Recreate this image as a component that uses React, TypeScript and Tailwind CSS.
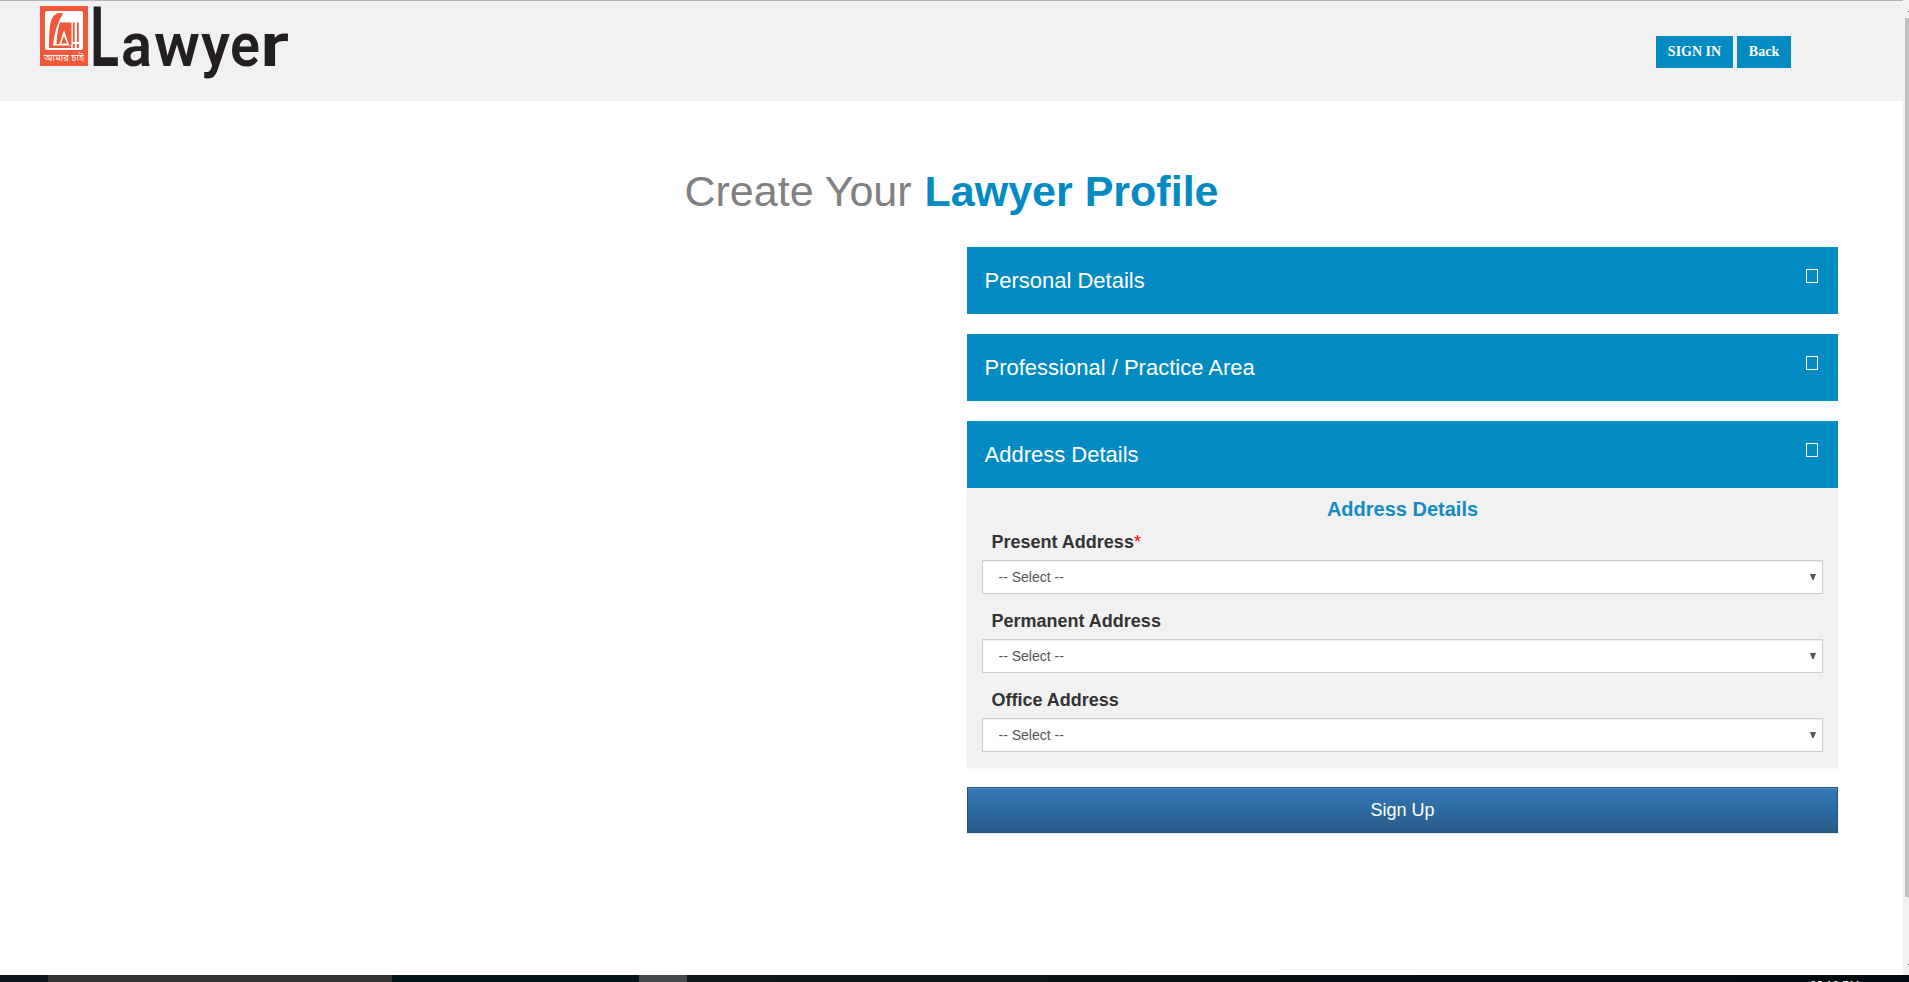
import React from "react";

const sections = ["Personal Details", "Professional / Practice Area", "Address Details"];

const fields = [
  { label: "Present Address", required: true },
  { label: "Permanent Address", required: false },
  { label: "Office Address", required: false },
];

const wordmark = [
  { ch: "L", x: 90, w: 29, size: 84 },
  { ch: "a", x: 121, w: 31, size: 62 },
  { ch: "w", x: 154, w: 46, size: 62 },
  { ch: "y", x: 201, w: 29, size: 62 },
  { ch: "e", x: 230, w: 30, size: 62 },
  { ch: "r", x: 260, w: 29, size: 62 },
];

function Logo() {
  return (
    <svg className="block h-[100px] w-[300px]" viewBox="0 1 300 100" role="img" aria-label="Lawyer">
      <rect x="40" y="6" width="48" height="60" fill="#f0583a" />
      <rect x="45" y="11" width="38" height="39" rx="2" fill="#fff" />
      <path
        d="M63 13.5 C53 11 50.5 20 49.5 30 Q48.8 38 49 48 L71 48 L71 45.5 L53 45.5 Q55 26 63 13.5Z"
        fill="#f0583a"
      />
      <path d="M60 22.5H71.5V45H69L64 30L59.5 44H56.5Q57 31 60 22.5Z" fill="#f0583a" />
      <path d="M64 36L67 43.5H61Z" fill="#f0583a" />
      <path d="M73.8 22.5V42M77.8 22.5V42" stroke="#f0583a" strokeWidth="1.8" />
      <path d="M72.8 44h2v4h-2zM76.8 44h2v4h-2z" fill="#f0583a" />
      <text
        x="44"
        y="61"
        fontSize="9"
        fill="#fff"
        textLength="40"
        lengthAdjust="spacingAndGlyphs"
        className="font-['Noto_Sans_Bengali','Noto_Sans',sans-serif]"
      >
        আমার চাই
      </text>
      <g fill="#231f20" className="font-['Roboto',sans-serif]" fontWeight="600">
        {wordmark.map((g) => (
          <text key={g.ch} x={g.x} y="66" fontSize={g.size} textLength={g.w} lengthAdjust="spacingAndGlyphs">
            {g.ch}
          </text>
        ))}
      </g>
    </svg>
  );
}

function Header() {
  return (
    <header className="flex h-[101px] items-start justify-between border-t border-[#b4b4b4] bg-[#f1f1f1] pr-[112px]">
      <Logo />
      <nav className="mt-[35px] flex gap-1 text-center font-['Liberation_Serif',serif] text-sm font-bold text-white">
        <a className="h-8 w-[77px] bg-[#028bc2] pt-[6px] leading-5">SIGN IN</a>
        <a className="h-8 w-[54px] bg-[#028bc2] pt-[6px] leading-5">Back</a>
      </nav>
    </header>
  );
}

function SectionBar({ title }: { title: string }) {
  return (
    <div className="flex h-[67px] items-start justify-between bg-[#028bc2] pl-4 pr-5 text-white">
      <h4 className="pl-[1.5px] pt-[22px] text-[22px] leading-6">{title}</h4>
      <span className="mt-[22px] h-[14px] w-3 border border-white" />
    </div>
  );
}

function AddressPanel() {
  return (
    <div className="h-[279px] bg-[#f1f1f1] px-[15px] pt-[9px] shadow-[0_1px_2px_rgba(0,0,0,0.08)]">
      <h5 className="text-center text-[20px] font-bold leading-6 text-[#138bc2]">Address Details</h5>
      {fields.map((f) => (
        <div key={f.label} className="h-[79px] pt-[9px]">
          <label className="block h-[30px] pl-[9.5px] text-[18px] font-bold leading-6 text-[#333]">
            {f.label}
            {f.required && <span className="font-normal text-[#f00]">*</span>}
          </label>
          <div className="flex h-[34px] items-center justify-between border border-[#ccc] bg-white pl-[15.5px] pr-[6px] text-sm text-[#555] shadow-[inset_0_1px_1px_rgba(0,0,0,0.075)]">
            <span>-- Select --</span>
            <svg className="h-[6px] w-[6px]" viewBox="0 0 6 6">
              <path d="M0 0H6L3.6 6H2.4Z" fill="#555" />
            </svg>
          </div>
        </div>
      ))}
    </div>
  );
}

function Scrollbar() {
  return (
    <div className="flex w-[6px] flex-col items-end bg-[#f1f1f1] pt-[11px]">
      <div className="h-px w-px bg-[#505050]" />
      <div className="mt-[6px] h-[879px] w-1 bg-[#c1c1c1]" />
      <div className="mt-[67px] h-px w-px bg-[#505050]" />
    </div>
  );
}

function Taskbar() {
  return (
    <div className="flex h-[7px] overflow-hidden bg-[#020d12]">
      <div className="w-12 bg-[#0b171c]" />
      <div className="w-[344px] bg-[#333]" />
      <div className="w-[247px] bg-[#04141b]" />
      <div className="w-12 bg-[#44494b]" />
      <div className="w-[1123px] bg-gradient-to-r from-[#101719] to-[#020d12]" />
      <span className="whitespace-nowrap pt-[3px] text-[11.5px] leading-[14px] text-white">02:10 PM</span>
    </div>
  );
}

export default function App() {
  return (
    <div className="flex h-[982px] w-[1909px] flex-col overflow-hidden bg-white font-['Liberation_Sans',Arial,sans-serif]">
      <div className="flex h-[975px]">
        <div className="w-[1903px]">
          <Header />
          <h1 className="mt-[60px] h-[86px] text-center text-[43px] leading-[60px] text-[#808080]">
            Create Your <b className="ml-px font-bold text-[#028bc2]">Lawyer Profile</b>
          </h1>
          <main className="ml-[967px] w-[871px]">
            <div className="flex flex-col gap-5">
              {sections.map((s) => (
                <SectionBar key={s} title={s} />
              ))}
            </div>
            <AddressPanel />
            <button className="mt-5 block h-[46px] w-full border border-[#245580] bg-gradient-to-b from-[#337ab7] to-[#265a88] text-[18px] leading-6 text-white shadow-[inset_0_1px_0_rgba(255,255,255,0.15),0_1px_1px_rgba(0,0,0,0.075)]">
              Sign Up
            </button>
          </main>
        </div>
        <Scrollbar />
      </div>
      <Taskbar />
    </div>
  );
}
